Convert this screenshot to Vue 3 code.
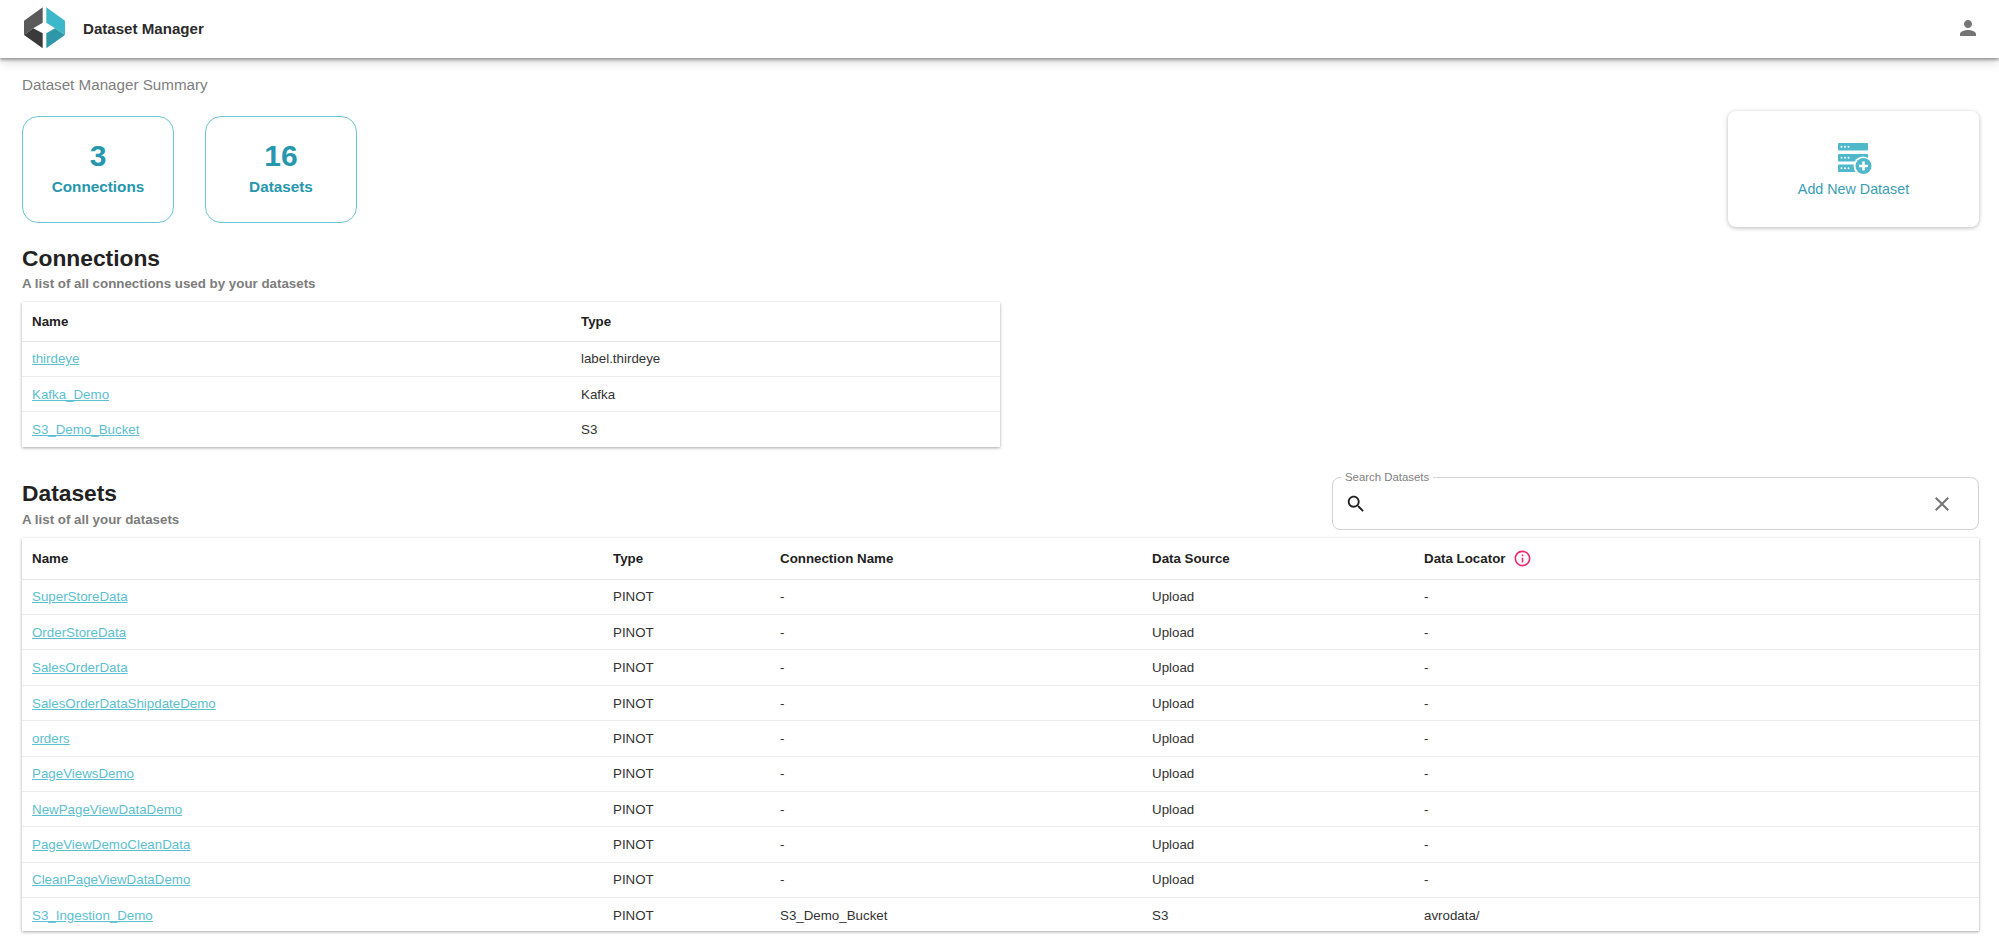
<script setup>
const connections = [
  { name: 'thirdeye', type: 'label.thirdeye' },
  { name: 'Kafka_Demo', type: 'Kafka' },
  { name: 'S3_Demo_Bucket', type: 'S3' },
]
const names = ['SuperStoreData', 'OrderStoreData', 'SalesOrderData', 'SalesOrderDataShipdateDemo', 'orders', 'PageViewsDemo', 'NewPageViewDataDemo', 'PageViewDemoCleanData', 'CleanPageViewDataDemo']
const datasets = [
  ...names.map((name) => ({ name, type: 'PINOT', conn: '-', source: 'Upload', locator: '-' })),
  { name: 'S3_Ingestion_Demo', type: 'PINOT', conn: 'S3_Demo_Bucket', source: 'S3', locator: 'avrodata/' },
]
</script>

<template>
  <div class="page">
    <header class="topbar">
      <div class="brand">
        <svg class="logo" viewBox="0 0 41 42" width="41" height="42">
          <path d="M18.7 0.3 L0 13.7 L0 28 L9.3 21.3 L18.7 15.7 Z" fill="#5a5a5a" />
          <path d="M0 28 L18.7 41.3 L18.7 26.3 L9.3 21.3 Z" fill="#3a3a3a" />
          <path d="M22.3 0.3 L41 13.7 L41 28 L31 21.3 L22.3 15.7 Z" fill="#3db8cb" />
          <path d="M41 28 L22.3 41.3 L22.3 26.3 L31 21.3 Z" fill="#2f97a8" />
        </svg>
        <span class="brand-name">Dataset Manager</span>
      </div>
      <svg class="user" viewBox="0 0 24 24" width="24" height="24"><path fill="#757575" d="M12 12c2.21 0 4-1.79 4-4s-1.79-4-4-4-4 1.79-4 4 1.79 4 4 4zm0 2c-2.67 0-8 1.34-8 4v2h16v-2c0-2.66-5.33-4-8-4z" /></svg>
    </header>

    <main class="content">
      <div class="crumb">Dataset Manager Summary</div>

      <section class="summary">
        <div class="stats">
          <div class="stat"><div class="num">3</div><div class="lbl">Connections</div></div>
          <div class="stat"><div class="num">16</div><div class="lbl">Datasets</div></div>
        </div>
        <div class="add">
          <svg viewBox="0 0 34 31" width="34" height="31">
            <rect x="0" y="0" width="30" height="7.5" rx="1" fill="#4fb9cb" />
            <rect x="0" y="11" width="30" height="7.5" rx="1" fill="#4fb9cb" />
            <rect x="0" y="21.5" width="30" height="7.5" rx="1" fill="#4fb9cb" />
            <g fill="#fff">
              <circle cx="3.5" cy="3.8" r="1" /><circle cx="7" cy="3.8" r="1" /><circle cx="10.5" cy="3.8" r="1" />
              <circle cx="3.5" cy="14.8" r="1" /><circle cx="7" cy="14.8" r="1" /><circle cx="10.5" cy="14.8" r="1" />
              <circle cx="3.5" cy="25.3" r="1" /><circle cx="7" cy="25.3" r="1" /><circle cx="10.5" cy="25.3" r="1" />
              <circle cx="25" cy="23" r="9.5" />
            </g>
            <circle cx="25.5" cy="23" r="8" fill="#4fb9cb" />
            <path d="M25.5 18.5v9M21 23h9" stroke="#fff" stroke-width="2.6" />
          </svg>
          <span>Add New Dataset</span>
        </div>
      </section>

      <section class="conn">
        <h2>Connections</h2>
        <p class="sub">A list of all connections used by your datasets</p>
        <table class="tbl conn-tbl">
          <colgroup><col class="c-name" /><col /></colgroup>
          <thead><tr><th>Name</th><th>Type</th></tr></thead>
          <tbody>
            <tr v-for="c in connections" :key="c.name"><td><a>{{ c.name }}</a></td><td>{{ c.type }}</td></tr>
          </tbody>
        </table>
      </section>

      <section class="ds">
        <div class="ds-head">
          <div>
            <h2>Datasets</h2>
            <p class="sub">A list of all your datasets</p>
          </div>
          <fieldset class="search">
            <legend>Search Datasets</legend>
            <svg class="mag" viewBox="0 0 24 24" width="22" height="22"><path fill="#222" d="M15.5 14h-.79l-.28-.27C15.41 12.59 16 11.11 16 9.5 16 5.91 13.09 3 9.5 3S3 5.91 3 9.5 5.91 16 9.5 16c1.61 0 3.09-.59 4.23-1.57l.27.28v.79l5 4.99L20.49 19l-4.99-5zm-6 0C7.01 14 5 11.99 5 9.5S7.01 5 9.5 5 14 7.01 14 9.5 11.99 14 9.5 14z" /></svg>
            <svg viewBox="0 0 24 24" width="24" height="24"><path fill="#757575" d="M19 6.41 17.59 5 12 10.59 6.41 5 5 6.41 10.59 12 5 17.59 6.41 19 12 13.41 17.59 19 19 17.59 13.41 12z" /></svg>
          </fieldset>
        </div>
        <table class="tbl ds-tbl">
          <colgroup><col class="d1" /><col class="d2" /><col class="d3" /><col class="d4" /><col /></colgroup>
          <thead>
            <tr>
              <th>Name</th><th>Type</th><th>Connection Name</th><th>Data Source</th>
              <th>
                <span class="loc">Data Locator
                  <svg viewBox="0 0 24 24" width="19" height="19"><path fill="#f0266f" d="M11 7h2v2h-2zm0 4h2v6h-2zm1-9C6.48 2 2 6.48 2 12s4.48 10 10 10 10-4.48 10-10S17.52 2 12 2zm0 18c-4.41 0-8-3.59-8-8s3.59-8 8-8 8 3.59 8 8-3.59 8-8 8z" /></svg>
                </span>
              </th>
            </tr>
          </thead>
          <tbody>
            <tr v-for="d in datasets" :key="d.name">
              <td><a>{{ d.name }}</a></td><td>{{ d.type }}</td><td>{{ d.conn }}</td><td>{{ d.source }}</td><td>{{ d.locator }}</td>
            </tr>
          </tbody>
        </table>
      </section>
    </main>
  </div>
</template>

<style>
html, body { margin: 0; background: #fff; }
</style>

<style scoped>
.page { font-family: "Liberation Sans", Arial, sans-serif; color: #333; width: 1999px; height: 945px; overflow: hidden; }
.topbar { box-sizing: border-box; height: 58px; display: flex; align-items: center; justify-content: space-between; padding: 0 19px 2px 24px; background: #fff; box-shadow: 0 2px 3px rgba(0,0,0,.35), 0 5px 10px rgba(0,0,0,.12); position: relative; }
.brand { display: flex; align-items: center; gap: 18px; }
.brand-name { font-weight: 700; font-size: 15.1px; color: #2b2b2b; }
.logo { display: block; }
.user { display: block; }
.content { padding: 0 20px 0 22px; }
.crumb { font-size: 15.2px; color: #808080; margin-top: 18px; line-height: 18px; }
.summary { display: flex; justify-content: space-between; align-items: flex-start; margin-top: 17px; }
.stats { display: flex; gap: 31px; margin-top: 5px; }
.stat { box-sizing: border-box; width: 152px; height: 107px; padding-bottom: 3px; border: 1.5px solid #6cc5d5; border-radius: 16px; display: flex; flex-direction: column; align-items: center; justify-content: center; color: #2697ad; }
.num { font-size: 30px; font-weight: 700; line-height: 36px; }
.lbl { font-size: 15.3px; font-weight: 700; line-height: 22px; margin-top: 2px; }
.add { box-sizing: border-box; width: 251px; height: 116px; padding-top: 2px; border-radius: 8px; box-shadow: 0 1px 4px rgba(0,0,0,.28); display: flex; flex-direction: column; align-items: center; justify-content: center; color: #3a9db1; font-size: 14.3px; gap: 7px; }
.add svg { display: block; margin-left: 3px; }
h2 { margin: 0; font-size: 22.8px; font-weight: 700; color: #222; line-height: 28px; }
.sub { margin: 0; font-size: 13.33px; font-weight: 700; color: #7c7c7c; line-height: 16px; margin-top: 4px; }
.conn { margin-top: 17px; }
.tbl { border-collapse: collapse; table-layout: fixed; font-size: 13.33px; color: #333; box-shadow: 0 1px 3px rgba(0,0,0,.35); background: #fff; }
.tbl th { text-align: left; font-weight: 700; color: #222; padding: 0 10px; border-bottom: 1px solid #e4e4e4; }
.tbl td { padding: 0 10px; border-bottom: 1px solid #ececec; }
.tbl tbody tr:last-child td { border-bottom: 0; }
.tbl a { color: #5bbfd0; text-decoration: underline; }
.conn-tbl { width: 978px; margin-top: 10px; }
.conn-tbl thead tr { height: 39px; }
.conn-tbl tbody tr { height: 35.4px; }
.c-name { width: 549px; }
.ds { margin-top: 32px; }
.ds .sub { margin-top: 5px; }
.ds-head { display: flex; justify-content: space-between; align-items: flex-start; }
.search { box-sizing: border-box; width: 647px; height: 59px; margin: -8px 0 0; padding: 0 24px 4px 8px; border: 1px solid #d2d2d2; border-radius: 8px; display: flex; align-items: center; justify-content: space-between; min-width: 0; }
.search legend { font-size: 11.4px; color: #808080; padding: 0 4px; margin-left: 0; }
.search svg { display: block; }
.search .mag { margin-left: 4px; }
.ds-tbl { width: 1957px; margin-top: 8px; }
.ds-tbl thead tr { height: 41px; }
.ds-tbl tbody tr { height: 35.4px; }
.ds-tbl tbody tr:last-child { height: 33px; }
.ds-tbl tbody tr:last-child td { padding-top: 2px; }
.d1 { width: 581px; }
.d2 { width: 167px; }
.d3 { width: 372px; }
.d4 { width: 272px; }
.loc { display: inline-flex; align-items: center; gap: 8px; }
</style>
